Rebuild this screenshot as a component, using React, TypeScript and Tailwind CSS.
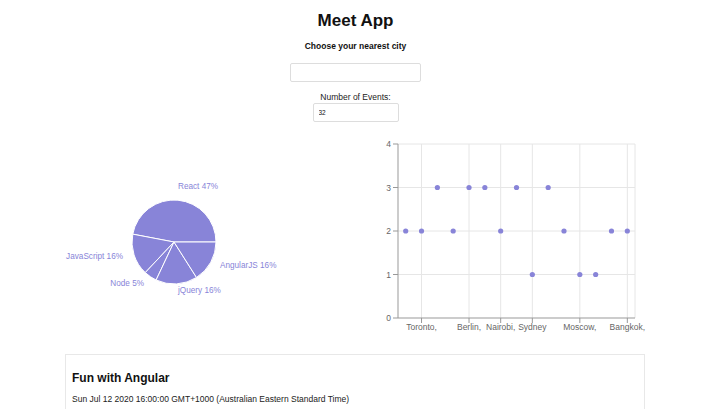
import React from 'react'

const PURPLE = '#8884d8'

const genres = [
    { name: 'React', value: 47 },
    { name: 'JavaScript', value: 16 },
    { name: 'Node', value: 5 },
    { name: 'jQuery', value: 16 },
    { name: 'AngularJS', value: 16 },
]

// label spots picked by eye (svg coords)
const labelPos = [
    { x: 178, y: 51, anchor: 'start' },
    { x: 123, y: 121, anchor: 'end' },
    { x: 144, y: 148, anchor: 'end' },
    { x: 178, y: 155, anchor: 'start' },
    { x: 220, y: 130, anchor: 'start' },
]

const counts = [2, 2, 3, 2, 3, 3, 2, 3, 1, 3, 2, 1, 1, 2, 2]
const ticks: Record<number, string> = {
    1: 'Toronto,',
    4: 'Berlin,',
    6: 'Nairobi,',
    8: 'Sydney',
    11: 'Moscow,',
    14: 'Bangkok,',
}

function GenrePie() {
    const cx = 174, cy = 107, r = 42
    const total = genres.reduce((s, g) => s + g.value, 0)
    let start = 0
    const pt = (deg: number) => {
        const a = (deg * Math.PI) / 180
        return [cx + r * Math.cos(a), cy - r * Math.sin(a)]
    }
    return (
        <svg width={351} height={200} className="block">
            {genres.map(g => {
                const sweep = (g.value / total) * 360
                const [x1, y1] = pt(start)
                const [x2, y2] = pt(start + sweep)
                const large = sweep > 180 ? 1 : 0
                start += sweep
                return (
                    <path
                        key={g.name}
                        d={`M${cx},${cy} L${x1},${y1} A${r},${r} 0 ${large} 0 ${x2},${y2} Z`}
                        fill={PURPLE}
                        stroke="#fff"
                        strokeWidth={1}
                    />
                )
            })}
            {genres.map((g, i) => (
                <text
                    key={g.name}
                    x={labelPos[i].x}
                    y={labelPos[i].y}
                    textAnchor={labelPos[i].anchor as 'start' | 'end'}
                    dominantBaseline="central"
                    fill={PURPLE}
                    fontSize={8.2}
                >
                    {g.name} {g.value}%
                </text>
            ))}
        </svg>
    )
}

function CityScatter() {
    const left = 47, right = 284, top = 9, bottom = 183
    const step = 15.83
    const x0 = 54.7
    const yOf = (v: number) => bottom - v * 43.5
    return (
        <svg width={352} height={200} className="block">
            {/* grid */}
            {[1, 2, 3, 4].map(v => (
                <line key={v} x1={left} x2={right} y1={yOf(v)} y2={yOf(v)} stroke="#e6e6e6" />
            ))}
            {Object.keys(ticks).map(k => {
                const x = x0 + Number(k) * step
                return <line key={k} x1={x} x2={x} y1={top} y2={bottom} stroke="#e6e6e6" />
            })}
            <line x1={right} x2={right} y1={top} y2={bottom} stroke="#e6e6e6" />
            {/* axes */}
            <line x1={left} x2={left} y1={top} y2={bottom} stroke="#999" />
            <line x1={left} x2={right} y1={bottom} y2={bottom} stroke="#999" />
            {[0, 1, 2, 3, 4].map(v => (
                <g key={v}>
                    <line x1={left - 5} x2={left} y1={yOf(v)} y2={yOf(v)} stroke="#999" />
                    <text x={left - 7} y={yOf(v)} textAnchor="end" dominantBaseline="central" fontSize={8.5} fill="#666">
                        {v}
                    </text>
                </g>
            ))}
            {Object.entries(ticks).map(([k, label]) => {
                const x = x0 + Number(k) * step
                return (
                    <g key={k}>
                        <line x1={x} x2={x} y1={bottom} y2={bottom + 5} stroke="#999" />
                        <text x={x} y={bottom + 9} textAnchor="middle" dominantBaseline="central" fontSize={8.5} fill="#666">
                            {label}
                        </text>
                    </g>
                )
            })}
            {counts.map((v, i) => (
                <circle key={i} cx={x0 + i * step} cy={yOf(v)} r={2.6} fill={PURPLE} />
            ))}
        </svg>
    )
}

export default function App() {
    return (
        <div className="w-[703px] h-[409px] overflow-hidden bg-white text-[#111] font-['Liberation_Sans','Helvetica',sans-serif]">
            <div className="pl-2 flex flex-col items-center">
                <h1 className="mt-[10px] text-[17px] font-bold leading-[22px]">Meet App</h1>
                <h4 className="mt-[8px] text-[8.5px] font-bold leading-[12px]">Choose your nearest city</h4>
                <input
                    type="text"
                    className="mt-[11px] w-[131px] h-[19px] border border-[#ddd] rounded-[2px] px-1 text-[7px] outline-none"
                />
                <label className="mt-[9px] text-[8.5px] leading-[12px] text-[#222]">Number of Events:</label>
                <input
                    type="text"
                    defaultValue="32"
                    className="w-[86px] h-[19px] border border-[#ddd] rounded-[2px] px-[5px] text-[6.5px] outline-none"
                />
            </div>

            <div className="mt-[13px] flex">
                <div className="w-[351px]">
                    <GenrePie />
                </div>
                <div className="w-[352px]">
                    <CityScatter />
                </div>
            </div>

            <div className="ml-[65px] mt-[19px] w-[580px] border border-[#e8e8e8] pl-[6px] pr-[7px] pt-[15px] pb-4">
                <h2 className="text-[12px] font-bold leading-[16px]">Fun with Angular</h2>
                <p className="mt-[8px] text-[8.5px] leading-[10px] text-[#222]">
                    Sun Jul 12 2020 16:00:00 GMT+1000 (Australian Eastern Standard Time)
                </p>
            </div>
        </div>
    )
}
